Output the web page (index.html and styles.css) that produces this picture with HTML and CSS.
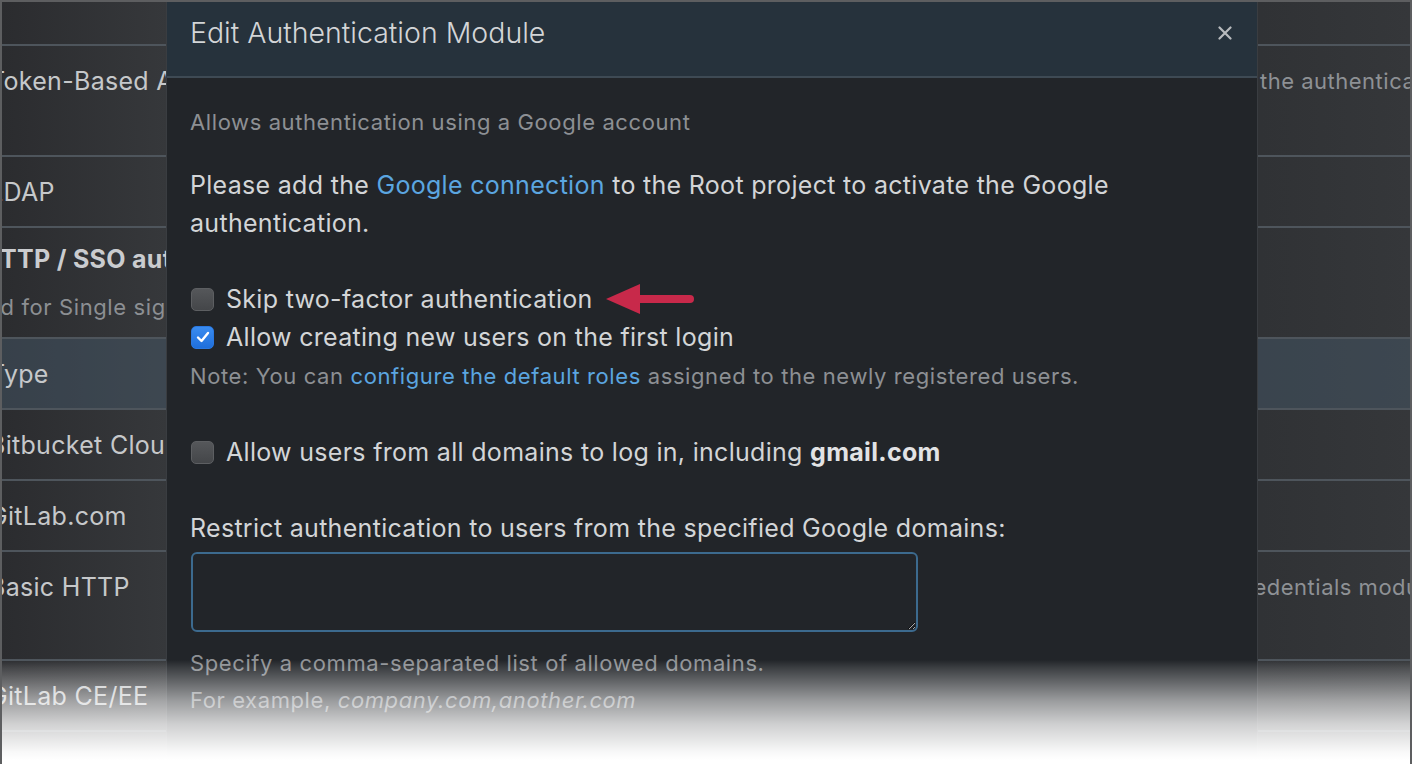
FILE: index.html
```html
<!DOCTYPE html>
<html lang="en">
<head>
<meta charset="utf-8">
<title>Edit Authentication Module</title>
<link rel="stylesheet" href="styles.css">
</head>
<body>
<div class="frame">
  <div class="table">
    <div class="row row-top"></div>
    <div class="row row-tall">
      <div class="c-name">Token-Based Authentication</div>
      <div class="c-desc"><span class="desc-text">the authentication</span></div>
    </div>
    <div class="row">
      <div class="c-name">LDAP</div>
    </div>
    <div class="row row-tall row-section">
      <div class="c-name">
        <div class="sec-title">HTTP / SSO authentication</div>
        <div class="sec-sub">Used for Single sign-on</div>
      </div>
    </div>
    <div class="row row-hl">
      <div class="c-name">Type</div>
    </div>
    <div class="row">
      <div class="c-name">Bitbucket Cloud</div>
    </div>
    <div class="row">
      <div class="c-name">GitLab.com</div>
    </div>
    <div class="row row-tall2">
      <div class="c-name">Basic HTTP</div>
      <div class="c-desc"><span class="desc-text desc-cut">credentials module</span></div>
    </div>
    <div class="row">
      <div class="c-name">GitLab CE/EE</div>
    </div>
    <div class="row"></div>
  </div>

  <div class="modal">
    <div class="modal-head">
      <div class="modal-title">Edit Authentication Module</div>
      <button class="close" aria-label="Close">
        <svg width="14" height="14" viewBox="0 0 14 14"><path d="M1.5 1.5 L12.5 12.5 M12.5 1.5 L1.5 12.5" stroke="#b8bbbe" stroke-width="2.2" stroke-linecap="round"/></svg>
      </button>
    </div>
    <div class="modal-body">
      <div class="muted intro">Allows authentication using a Google account</div>
      <p class="lead">Please add the <a href="#">Google connection</a> to the Root project to activate the Google authentication.</p>

      <label class="check first-check">
        <span class="box"></span>
        <span>Skip two-factor authentication</span>
        <svg class="arrow" width="92" height="34" viewBox="0 0 92 34"><path d="M34 17 H84" stroke="#c8294a" stroke-width="8" stroke-linecap="round"/><polygon points="0,17 34,2 34,32" fill="#c8294a"/></svg>
      </label>
      <label class="check">
        <span class="box box-on"><svg width="16" height="16" viewBox="0 0 16 16"><path d="M3 8.5 L6.5 12 L13 4" fill="none" stroke="#fff" stroke-width="2.4" stroke-linecap="round" stroke-linejoin="round"/></svg></span>
        <span>Allow creating new users on the first login</span>
      </label>
      <div class="muted note">Note: You can <a href="#">configure the default roles</a> assigned to the newly registered users.</div>

      <label class="check domains-check">
        <span class="box"></span>
        <span>Allow users from all domains to log in, including <b>gmail.com</b></span>
      </label>

      <div class="field-label">Restrict authentication to users from the specified Google domains:</div>
      <textarea class="domains"></textarea>
      <div class="muted hint">Specify a comma-separated list of allowed domains.<br>For example, <i>company.com,another.com</i></div>
    </div>
  </div>

  <div class="fade"></div>
</div>
</body>
</html>
```
FILE: styles.css
```css
* { box-sizing: border-box; }

html, body {
  margin: 0;
  padding: 0;
  background: #ffffff;
}

body {
  width: 1412px;
  height: 764px;
  overflow: hidden;
  font-family: Inter, "Noto Sans", "Liberation Sans", sans-serif;
}

.frame {
  position: relative;
  width: 1412px;
  height: 764px;
  overflow: hidden;
  border: 2px solid #5d5e60;
  border-bottom: none;
  background: linear-gradient(90deg, #2b2c2f 0px, #36383b 165px, #303235 1260px, #35373a 100%);
}

/* background table */
.table {
  display: flex;
  flex-direction: column;
}

.row {
  display: flex;
  justify-content: space-between;
  height: 71px;
  border-top: 2px solid #4e555c;
  padding-top: 17px;
}

.row-top {
  height: 42px;
  border-top: none;
}

.row-tall { height: 111px; }
.row-tall2 { height: 109px; }

.row-section { padding-top: 13px; }

.row-hl {
  background: rgba(70, 90, 108, 0.45);
}

.c-name {
  margin-left: -13px;
  font-size: 25px;
  line-height: 36px;
  letter-spacing: 0.3px;
  color: #c6c8ca;
  white-space: nowrap;
}

.row-section .c-name { margin-left: 0; }

.sec-title {
  margin-left: -21px;
  font-weight: 700;
  color: #cacccf;
}

.sec-sub {
  margin-top: 15px;
  margin-left: -44px;
  font-size: 22px;
  line-height: 30px;
  letter-spacing: 0.6px;
  color: #8c8f93;
}

.c-desc {
  width: 150px;
  font-size: 22px;
  line-height: 36px;
  letter-spacing: 0.5px;
  color: #8e9195;
  white-space: nowrap;
}

.desc-cut { margin-left: -28px; }

/* modal */
.modal {
  position: absolute;
  left: 164px;
  top: 0;
  width: 1092px;
  height: 800px;
  background: #222529;
  border-left: 1px solid #3a3d41;
  border-right: 1px solid #3a3d41;
}

.modal-head {
  height: 76px;
  background: #26323c;
  border-bottom: 2px solid #3e4a54;
  display: flex;
  justify-content: space-between;
  align-items: flex-start;
  padding: 14px 25px 0 23px;
}

.modal-title {
  font-size: 28.5px;
  line-height: 34px;
  font-weight: 300;
  color: #d3d5d7;
}

.close {
  margin-top: 10px;
  padding: 0;
  border: none;
  background: none;
  display: flex;
}

.modal-body {
  padding: 29px 23px 0 23px;
  color: #d3d5d7;
  font-size: 25px;
  letter-spacing: 0.3px;
}

.muted {
  color: #8d9094;
  font-size: 22px;
  letter-spacing: 0.6px;
}

.intro { line-height: 30px; }

.lead {
  margin: 30px 0 0 0;
  line-height: 37.5px;
  width: 960px;
}

a {
  color: #5ba6e0;
  text-decoration: none;
}

.check {
  display: flex;
  align-items: center;
  gap: 12px;
  height: 38px;
  line-height: 38px;
  padding-left: 1px;
}

.first-check { margin-top: 38px; }
.domains-check { margin-top: 38px; }

.box {
  width: 23px;
  height: 23px;
  border-radius: 5px;
  background: linear-gradient(#55575a, #444649);
  border: 1px solid #5d5f62;
  display: flex;
  align-items: center;
  justify-content: center;
  flex: none;
}

.box-on {
  background: linear-gradient(#3a8cf0, #1f6fdc);
  border-color: #2a78e0;
}

.arrow {
  margin-left: 1px;
  margin-top: -1px;
}

.note {
  margin-top: 1px;
  line-height: 38px;
}

b {
  font-weight: 700;
  color: #e2e3e5;
}

.field-label {
  margin-top: 38px;
  line-height: 38px;
}

.domains {
  display: block;
  margin-top: 5px;
  width: 727px;
  height: 80px;
  border: 2px solid #3c6a8e;
  border-radius: 6px;
  background: #222529;
  color: #d3d5d7;
  margin-left: 1px;
}

.hint {
  margin-top: 13px;
  line-height: 37px;
}

/* bottom fade */
.fade {
  position: absolute;
  left: -2px;
  right: -2px;
  top: 658px;
  height: 110px;
  background: linear-gradient(rgba(255,255,255,0) 0px, rgba(255,255,255,0.12) 8px, rgba(255,255,255,0.55) 41px, rgba(255,255,255,0.78) 64px, rgba(255,255,255,0.97) 92px, #ffffff 100px);
}
```
